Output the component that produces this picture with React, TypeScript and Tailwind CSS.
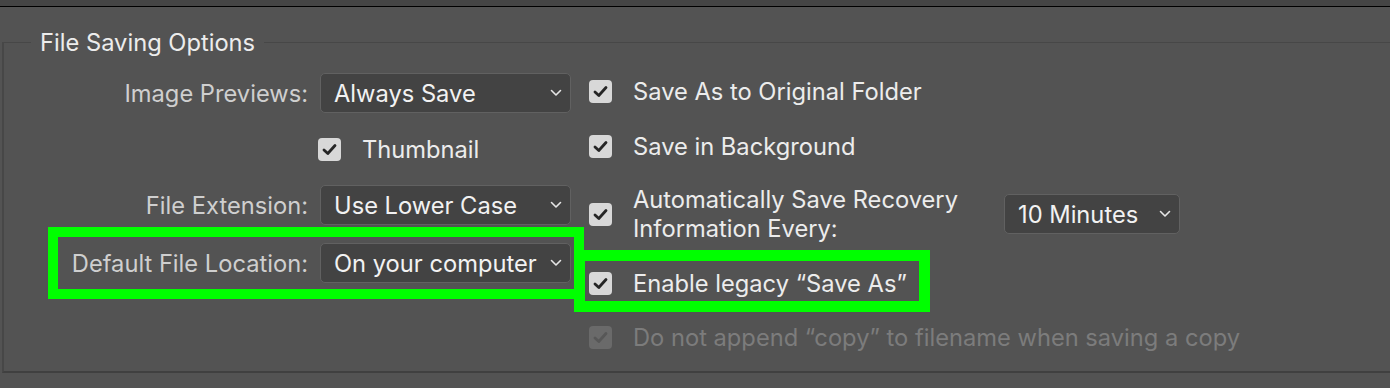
import React from "react";

function Chevron() {
  return (
    <svg width="12" height="8" viewBox="0 0 12 8" className="shrink-0">
      <polyline points="1.5,1.5 6,6 10.5,1.5" fill="none" stroke="#e6e6e6" strokeWidth="1.6" strokeLinecap="round" strokeLinejoin="round" />
    </svg>
  );
}

function Select({ value, width }: { value: string; width: string }) {
  return (
    <div
      className={`${width} h-[40px] shrink-0 flex items-center justify-between pl-[13px] pr-[8px] rounded-[5px] border border-[#616161] bg-[#434343] text-[#f2f2f2]`}
    >
      <span className="whitespace-nowrap">{value}</span>
      <Chevron />
    </div>
  );
}

function Check({ disabled = false }: { disabled?: boolean }) {
  return (
    <div
      className={
        disabled
          ? "w-[23px] h-[23px] shrink-0 rounded-[4px] bg-[#6a6a6a] flex items-center justify-center"
          : "w-[23px] h-[23px] shrink-0 rounded-[4px] bg-[#d8d8d8] flex items-center justify-center"
      }
    >
      <svg width="15" height="13" viewBox="0 0 15 13">
        <polyline
          points="2,7 5.8,10.5 13,2.5"
          fill="none"
          stroke={disabled ? "#575757" : "#262626"}
          strokeWidth="2.8"
          strokeLinecap="round"
          strokeLinejoin="round"
        />
      </svg>
    </div>
  );
}

export default function App() {
  return (
    <div className="relative w-[1390px] h-[388px] overflow-hidden bg-[#535353] font-['Inter',sans-serif] text-[23.7px] leading-[29px]">
      <div className="h-[6px] bg-[#454545]" />
      <div className="h-px bg-black" />

      <fieldset className="ml-[2px] mt-[21px] w-[1420px] h-[345px] border-t border-l-2 border-b-2 border-[#474747] border-b-[#404040]">
        <legend className="ml-[27px] px-[9px] text-[#ececec]">File Saving Options</legend>

        <div className="flex">
          {/* left column */}
          <div className="w-[567px] text-[#cfcfcf]">
            <div className="mt-[16px] h-[40px] flex items-center justify-end gap-[12px]">
              <span>Image Previews:</span>
              <Select value="Always Save" width="w-[251px]" />
            </div>
            <div className="mt-[16px] h-[40px] flex items-center pl-[314px] gap-[21px]">
              <Check />
              <span className="text-[#ececec]">Thumbnail</span>
            </div>
            <div className="mt-[16px] h-[40px] flex items-center justify-end gap-[12px]">
              <span>File Extension:</span>
              <Select value="Use Lower Case" width="w-[251px]" />
            </div>
            <div className="mt-[18px] h-[40px] flex items-center justify-end gap-[12px]">
              <span>Default File Location:</span>
              <Select value="On your computer" width="w-[251px]" />
            </div>
          </div>

          {/* right column */}
          <div className="ml-[18px] text-[#ececec]">
            <div className="mt-[14px] h-[40px] flex items-center gap-[21px]">
              <Check />
              <span>Save As to Original Folder</span>
            </div>
            <div className="mt-[15px] h-[40px] flex items-center gap-[21px]">
              <Check />
              <span>Save in Background</span>
            </div>
            <div className="mt-[19px] h-[58px] flex items-center gap-[21px]">
              <Check />
              <div className="w-[371px]">
                <div>Automatically Save Recovery</div>
                <div>Information Every:</div>
              </div>
              <Select value="10 Minutes" width="w-[176px] -ml-[21px]" />
            </div>
            <div className="mt-[20px] h-[40px] flex items-center gap-[21px]">
              <Check />
              <span>Enable legacy “Save As”</span>
            </div>
            <div className="mt-[14px] h-[40px] flex items-center gap-[21px]">
              <Check disabled />
              <span className="text-[#7c7c7c]">Do not append “copy” to filename when saving a copy</span>
            </div>
          </div>
        </div>
      </fieldset>

      {/* annotation highlights */}
      <div className="absolute left-[48px] top-[227px] w-[536px] h-[72px] border-[10px] border-[#00ff00]" />
      <div className="absolute left-[574px] top-[250px] w-[356px] h-[62px] border-[11px] border-[#00ff00]" />
    </div>
  );
}
